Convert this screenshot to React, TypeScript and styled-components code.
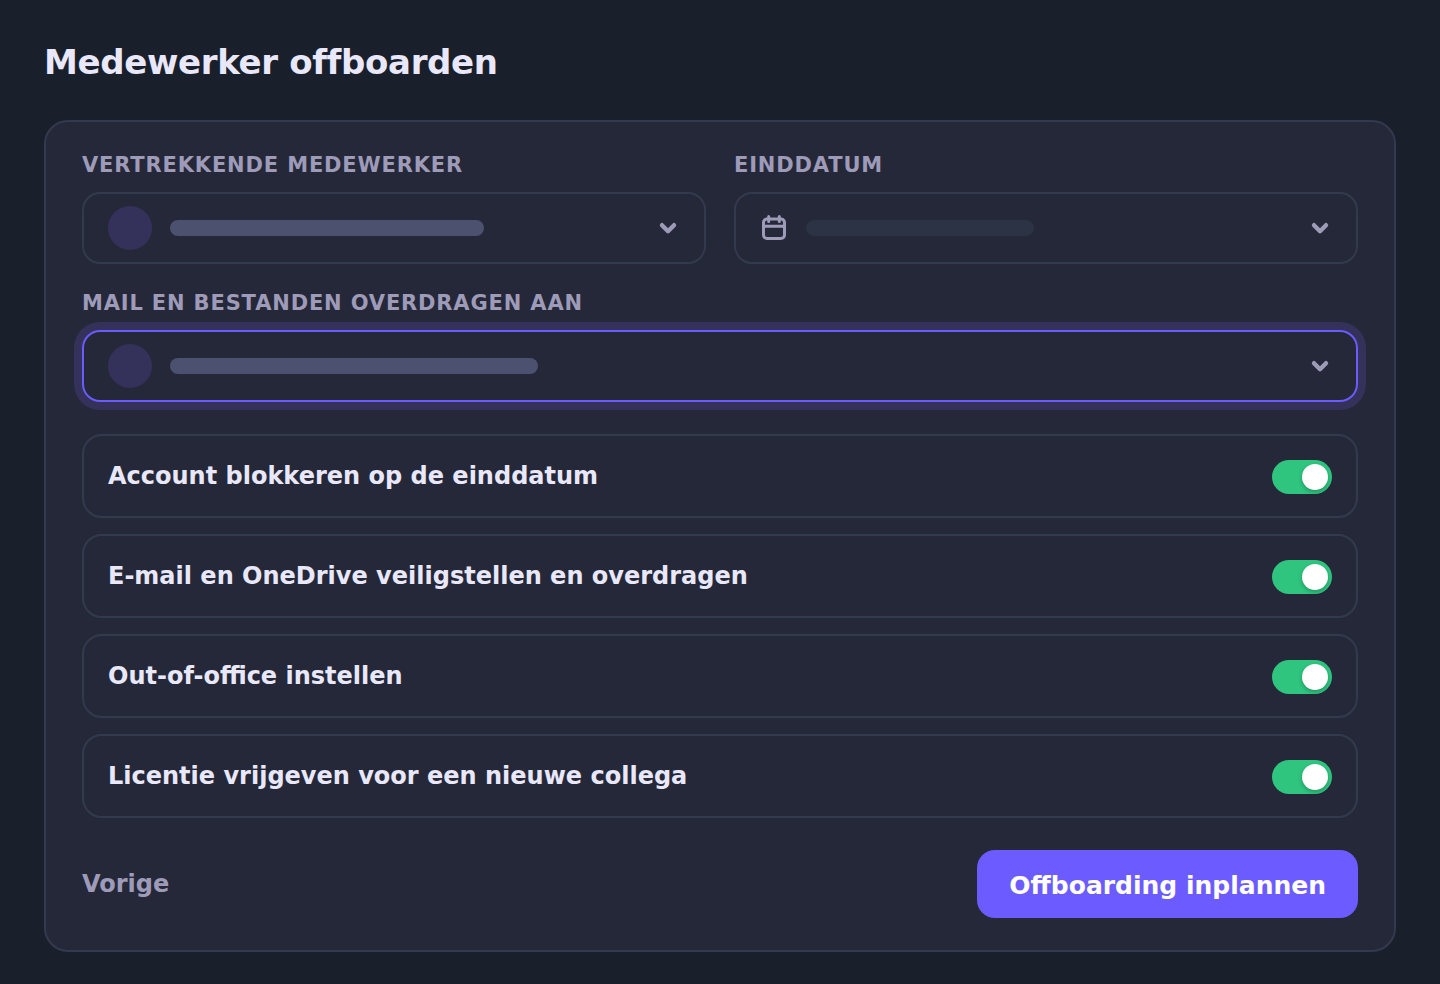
import React, { useId, useState } from "react";
import styled, { createGlobalStyle, css } from "styled-components";

const color = {
  page: "#1a1f2c",
  card: "#252839",
  border: "#343a4e",
  accent: "#6c5cff",
  accentSoft: "#34325b",
  text: "#e9e8fa",
  muted: "#9e9bb9",
  bar: "#4c516f",
  barFaint: "#2c3345",
  on: "#2fc57f",
};

const GlobalStyle = createGlobalStyle`
  *, *::before, *::after { box-sizing: border-box; }
  body {
    margin: 0;
    background: ${color.page};
    color: ${color.text};
    font-family: "DejaVu Sans", Verdana, sans-serif;
  }
`;

const Page = styled.main`
  padding: 40px 44px 32px;
`;

const Title = styled.h1`
  margin: 0 0 36px;
  font-size: 34px;
  line-height: 44px;
  font-weight: 700;
  letter-spacing: -0.01em;
`;

const Card = styled.form`
  display: flex;
  flex-direction: column;
  padding: 30px 36px 32px;
  background: ${color.card};
  border: 2px solid ${color.border};
  border-radius: 24px;
`;

const Fields = styled.div`
  display: grid;
  grid-template-columns: 1fr 1fr;
  gap: 26px 28px;
`;

const Field = styled.div<{ $wide?: boolean }>`
  display: flex;
  flex-direction: column;
  gap: 14px;
  ${(p) => p.$wide && css`grid-column: 1 / -1;`}
`;

const Label = styled.label`
  font-size: 21px;
  line-height: 26px;
  font-weight: 700;
  letter-spacing: 0.04em;
  text-transform: uppercase;
  color: ${color.muted};
`;

const Control = styled.div`
  display: grid;
  height: 72px;
  & > * { grid-area: 1 / 1; }
`;

const Select = styled.select<{ $active?: boolean }>`
  appearance: none;
  width: 100%;
  height: 100%;
  background: transparent;
  color: transparent;
  border: 2px solid ${color.border};
  border-radius: 18px;
  outline: none;
  cursor: pointer;
  ${(p) => p.$active && css`
    border-color: ${color.accent};
    box-shadow: 0 0 0 8px ${color.accentSoft};
  `}
`;

const ControlFace = styled.div`
  display: flex;
  align-items: center;
  gap: 18px;
  padding: 0 26px;
  pointer-events: none;
`;

const Avatar = styled.span`
  width: 44px;
  height: 44px;
  border-radius: 50%;
  background: ${color.accentSoft};
`;

const Bar = styled.span<{ $width: number; $faint?: boolean }>`
  width: ${(p) => p.$width}px;
  height: 16px;
  border-radius: 8px;
  background: ${(p) => (p.$faint ? color.barFaint : color.bar)};
`;

const Icon = styled.svg`
  flex: none;
  fill: none;
  stroke: ${color.muted};
  stroke-linecap: round;
  stroke-linejoin: round;
`;

const ChevronIcon = styled(Icon)`
  margin-left: auto;
`;

const Options = styled.div`
  display: flex;
  flex-direction: column;
  gap: 16px;
  margin-top: 32px;
`;

const Option = styled.label`
  display: flex;
  align-items: flex-start;
  justify-content: space-between;
  padding: 24px 24px 22px;
  border: 2px solid ${color.border};
  border-radius: 20px;
  font-size: 24px;
  line-height: 32px;
  font-weight: 700;
  cursor: pointer;
`;

const Toggle = styled.input`
  appearance: none;
  display: flex;
  flex: none;
  align-items: center;
  width: 60px;
  height: 34px;
  margin: 0;
  padding: 0 4px;
  border-radius: 17px;
  background: ${color.bar};
  cursor: pointer;

  &::before {
    content: "";
    width: 26px;
    height: 26px;
    border-radius: 50%;
    background: #fff;
    box-shadow: 0 2px 4px rgba(0, 0, 0, 0.25);
  }

  &:checked {
    justify-content: flex-end;
    background: ${color.on};
  }
`;

const Actions = styled.div`
  display: flex;
  align-items: center;
  justify-content: space-between;
  margin-top: 32px;
`;

const BackButton = styled.button`
  padding: 0;
  border: 0;
  background: none;
  color: ${color.muted};
  font: 700 24px/28px "DejaVu Sans", Verdana, sans-serif;
  cursor: pointer;
`;

const SubmitButton = styled.button`
  padding: 20px 32px 16px;
  border: 0;
  border-radius: 18px;
  background: ${color.accent};
  color: #fff;
  font: 700 25px/32px "DejaVu Sans", Verdana, sans-serif;
  cursor: pointer;
`;

const Chevron = () => (
  <ChevronIcon width="24" height="24" viewBox="0 0 24 24" strokeWidth="4.4" aria-hidden="true">
    <path d="M6 9.2l6 6 6-6" />
  </ChevronIcon>
);

const Calendar = () => (
  <Icon width="28" height="28" viewBox="0 0 28 28" strokeWidth="3" aria-hidden="true">
    <rect x="3.5" y="5" width="21" height="19.5" rx="3.5" />
    <path d="M3.5 12.2h21M8.7 2.6v5M19.3 2.6v5" />
  </Icon>
);

interface PickerProps {
  label: string;
  lead: React.ReactNode;
  barWidth: number;
  faint?: boolean;
  active?: boolean;
  wide?: boolean;
}

function Picker({ label, lead, barWidth, faint, active, wide }: PickerProps) {
  const id = useId();
  return (
    <Field $wide={wide}>
      <Label htmlFor={id}>{label}</Label>
      <Control>
        <Select id={id} $active={active} defaultValue="">
          <option value="" />
        </Select>
        <ControlFace>
          {lead}
          <Bar $width={barWidth} $faint={faint} />
          <Chevron />
        </ControlFace>
      </Control>
    </Field>
  );
}

const steps = [
  "Account blokkeren op de einddatum",
  "E-mail en OneDrive veiligstellen en overdragen",
  "Out-of-office instellen",
  "Licentie vrijgeven voor een nieuwe collega",
];

export default function App() {
  const [enabled, setEnabled] = useState(() => steps.map(() => true));
  const flip = (index: number) =>
    setEnabled((current) => current.map((on, i) => (i === index ? !on : on)));

  return (
    <>
      <GlobalStyle />
      <Page>
        <Title>Medewerker offboarden</Title>
        <Card onSubmit={(event) => event.preventDefault()}>
          <Fields>
            <Picker label="Vertrekkende medewerker" lead={<Avatar />} barWidth={314} />
            <Picker label="Einddatum" lead={<Calendar />} barWidth={228} faint />
            <Picker label="Mail en bestanden overdragen aan" lead={<Avatar />} barWidth={368} active wide />
          </Fields>
          <Options>
            {steps.map((step, index) => (
              <Option key={step}>
                {step}
                <Toggle
                  type="checkbox"
                  role="switch"
                  checked={enabled[index]}
                  onChange={() => flip(index)}
                />
              </Option>
            ))}
          </Options>
          <Actions>
            <BackButton type="button">Vorige</BackButton>
            <SubmitButton type="submit">Offboarding inplannen</SubmitButton>
          </Actions>
        </Card>
      </Page>
    </>
  );
}
